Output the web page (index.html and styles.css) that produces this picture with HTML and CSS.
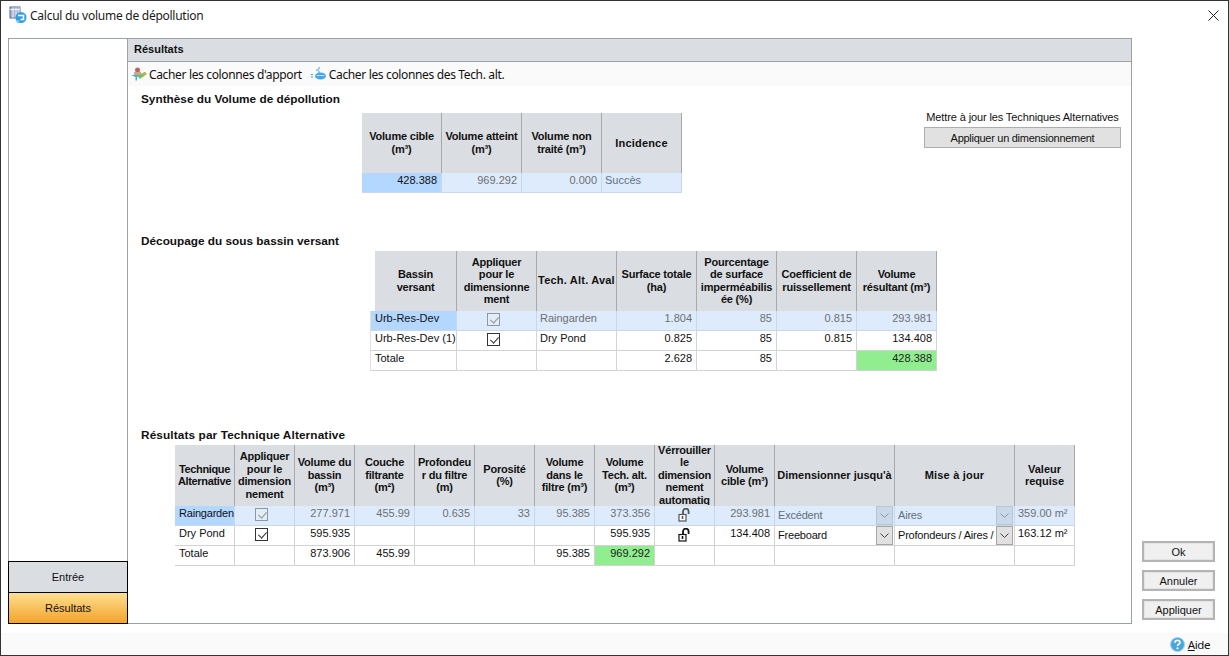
FILE: index.html
```html
<!DOCTYPE html>
<html lang="fr">
<head>
<meta charset="utf-8">
<title>Calcul du volume de dépollution</title>
<link rel="stylesheet" href="styles.css">
</head>
<body>
<div class="window">
  <header class="titlebar">
    <svg class="title-icon" width="19" height="18" viewBox="0 0 19 18">
      <rect x="1" y="1" width="10" height="11" fill="#aab4d4" stroke="#5d6a95"/>
      <path d="M1 3.500h10M4 1v11M7 1v11M10 1v11" stroke="#fff" stroke-width=".8"/>
      <circle cx="12" cy="11.500" r="5.500" fill="#2f9fe4"/>
      <path d="M9 9.500h5.500v4h-3" fill="none" stroke="#fff" stroke-width="1.600"/>
      <circle cx="9" cy="15.500" r="1.500" fill="#7cc8f4"/>
    </svg>
    <span class="title-text">Calcul du volume de dépollution</span>
    <svg class="close" width="11" height="11" viewBox="0 0 11 11"><path d="M.5.500l10 10M10.500.500l-10 10" stroke="#222" stroke-width="1" fill="none"/></svg>
  </header>

  <div class="main">
    <div class="panel">
      <nav class="nav">
        <div class="tab">Entrée</div>
        <div class="tab tab-active">Résultats</div>
      </nav>
      <section class="content">
        <div class="content-head">Résultats</div>
        <div class="toolbar">
          <span class="tool">
            <svg width="16" height="14" viewBox="0 0 16 14">
              <circle cx="6.500" cy="3" r="2.500" fill="#b9685c"/>
              <path d="M3 5h7v3.500H3z" fill="#d8a095"/>
              <path d="M6 8.500l8-3.500 2 2-7 5z" fill="#7fbf5f"/>
              <path d="M0 8h9L6 10v3.500H4.500V10z" fill="#3fb6c0"/>
              <path d="M11 6.500l3-1.500 1 2-2 1z" fill="#c9b04e"/>
            </svg>
            Cacher les colonnes d'apport
          </span>
          <span class="tool">
            <svg width="16" height="14" viewBox="0 0 16 14">
              <path d="M0 7.500h2M0 10h2M5 3h3M7 1h2M7 5h2" stroke="#3a9be0" stroke-width="1.200" fill="none"/>
              <ellipse cx="9.500" cy="9" rx="5.500" ry="3.500" fill="#43a9ec"/>
              <path d="M5.500 8.500h8" stroke="#bfe3fa" stroke-width="1"/>
            </svg>
            Cacher les colonnes des Tech. alt.
          </span>
        </div>

        <h2 class="sec-title">Synthèse du Volume de dépollution</h2>
        <div class="synth-row">
          <table class="grid grid-synth">
            <colgroup><col class="c80"><col class="c80"><col class="c80"><col class="c80"></colgroup>
            <thead>
              <tr><th>Volume cible<br>(m³)</th><th>Volume atteint<br>(m³)</th><th>Volume non<br>traité (m³)</th><th class="wide single">Incidence</th></tr>
            </thead>
            <tbody>
              <tr class="sel"><td class="num first">428.388</td><td class="num">969.292</td><td class="num">0.000</td><td class="blue">Succès</td></tr>
            </tbody>
          </table>
          <aside class="apply">
            <p class="apply-label">Mettre à jour les Techniques Alternatives</p>
            <button class="apply-btn" type="button">Appliquer un dimensionnement</button>
          </aside>
        </div>

        <h2 class="sec-title sec-two">Découpage du sous bassin versant</h2>
        <table class="grid grid-split">
          <colgroup><col class="c87"><col class="c80"><col class="c80"><col class="c80"><col class="c80"><col class="c80"><col class="c80"></colgroup>
          <thead>
            <tr>
              <th class="inset">Bassin<br>versant</th><th>Appliquer<br>pour le<br>dimensionne<br>ment</th><th class="wide">Tech. Alt. Aval</th><th>Surface totale<br>(ha)</th><th>Pourcentage<br>de surface<br>imperméabilis<br>ée (%)</th><th>Coefficient de<br>ruissellement</th><th>Volume<br>résultant (m³)</th>
            </tr>
          </thead>
          <tbody>
            <tr class="sel"><td class="first">Urb-Res-Dev</td><td class="mid"><span class="check dim"></span></td><td>Raingarden</td><td class="num">1.804</td><td class="num">85</td><td class="num">0.815</td><td class="num">293.981</td></tr>
            <tr><td class="first">Urb-Res-Dev (1)</td><td class="mid"><span class="check"></span></td><td>Dry Pond</td><td class="num">0.825</td><td class="num">85</td><td class="num">0.815</td><td class="num">134.408</td></tr>
            <tr><td class="first">Totale</td><td></td><td></td><td class="num">2.628</td><td class="num">85</td><td></td><td class="num ok">428.388</td></tr>
          </tbody>
        </table>

        <h2 class="sec-title sec-three">Résultats par Technique Alternative</h2>
        <table class="grid grid-tech">
          <colgroup><col class="c60"><col class="c60"><col class="c60"><col class="c60"><col class="c60"><col class="c60"><col class="c60"><col class="c60"><col class="c60"><col class="c60"><col class="c120"><col class="c120"><col class="c60"></colgroup>
          <thead>
            <tr>
              <th class="tight">Technique<br>Alternative</th><th>Appliquer<br>pour le<br>dimension<br>nement</th><th>Volume du<br>bassin<br>(m³)</th><th>Couche<br>filtrante<br>(m²)</th><th>Profondeu<br>r du filtre<br>(m)</th><th>Porosité<br>(%)</th><th>Volume<br>dans le<br>filtre (m³)</th><th>Volume<br>Tech. alt.<br>(m³)</th>
              <th class="clip"><div class="clip-box"><div>Vérrouiller<br>le<br>dimension<br>nement<br>automatiq</div></div></th>
              <th>Volume<br>cible (m³)</th><th class="plain">Dimensionner jusqu'à</th><th class="wide">Mise à jour</th><th class="plain">Valeur<br>requise</th>
            </tr>
          </thead>
          <tbody>
            <tr class="sel">
              <td class="first fit">Raingarden</td><td class="mid"><span class="check dim"></span></td><td class="num">277.971</td><td class="num">455.99</td><td class="num">0.635</td><td class="num">33</td><td class="num">95.385</td><td class="num">373.356</td>
              <td class="mid"><svg class="lock" width="12" height="14" viewBox="0 0 12 14"><path d="M5 7V3.500a2.800 2.800 0 0 1 5.600 0V6" fill="none" stroke="#555" stroke-width="1.800"/><rect x="1" y="6.500" width="7" height="6.500" fill="#fff" stroke="#555" stroke-width="1.200"/><path d="M4.500 8v3" stroke="#555" stroke-width="1.600"/></svg></td>
              <td class="num">293.981</td>
              <td class="cell-combo"><div class="combo"><span class="combo-text">Excédent</span><span class="combo-btn"><svg width="9" height="5" viewBox="0 0 9 5"><path d="M.5.500l4 4 4-4" fill="none" stroke="#8a98a8"/></svg></span></div></td>
              <td class="cell-combo"><div class="combo"><span class="combo-text">Aires</span><span class="combo-btn"><svg width="9" height="5" viewBox="0 0 9 5"><path d="M.5.500l4 4 4-4" fill="none" stroke="#8a98a8"/></svg></span></div></td>
              <td>359.00 m²</td>
            </tr>
            <tr>
              <td class="first">Dry Pond</td><td class="mid"><span class="check"></span></td><td class="num">595.935</td><td></td><td></td><td></td><td></td><td class="num">595.935</td>
              <td class="mid"><svg class="lock" width="12" height="14" viewBox="0 0 12 14"><path d="M5 7V3.500a2.800 2.800 0 0 1 5.600 0V6" fill="none" stroke="#111" stroke-width="1.800"/><rect x="1" y="6.500" width="7" height="6.500" fill="#fff" stroke="#111" stroke-width="1.200"/><path d="M4.500 8v3" stroke="#111" stroke-width="1.600"/></svg></td>
              <td class="num">134.408</td>
              <td class="cell-combo"><div class="combo"><span class="combo-text">Freeboard</span><span class="combo-btn"><svg width="9" height="5" viewBox="0 0 9 5"><path d="M.5.500l4 4 4-4" fill="none" stroke="#444"/></svg></span></div></td>
              <td class="cell-combo"><div class="combo"><span class="combo-text">Profondeurs / Aires /</span><span class="combo-btn"><svg width="9" height="5" viewBox="0 0 9 5"><path d="M.5.500l4 4 4-4" fill="none" stroke="#444"/></svg></span></div></td>
              <td>163.12 m²</td>
            </tr>
            <tr>
              <td class="first">Totale</td><td></td><td class="num">873.906</td><td class="num">455.99</td><td></td><td></td><td class="num">95.385</td><td class="num ok">969.292</td><td></td><td></td><td></td><td></td><td></td>
            </tr>
          </tbody>
        </table>
      </section>
    </div>
    <div class="actions">
      <button class="btn" type="button">Ok</button>
      <button class="btn" type="button">Annuler</button>
      <button class="btn" type="button">Appliquer</button>
    </div>
  </div>

  <footer class="footer">
    <svg width="15" height="15" viewBox="0 0 15 15">
      <circle cx="7.500" cy="7.500" r="7" fill="#47a6dc" stroke="#a5d4ef"/>
      <path d="M5 5.700c0-3 5-3 5-.2 0 1.800-2.500 1.800-2.500 3.600" fill="none" stroke="#fff" stroke-width="1.700"/>
      <circle cx="7.500" cy="11.300" r="1.100" fill="#fff"/>
    </svg>
    <span class="help"><u>A</u>ide</span>
  </footer>
</div>
</body>
</html>
```
FILE: styles.css
```css
* { box-sizing: border-box; }
html, body { margin: 0; padding: 0; }
body {
  width: 1229px;
  height: 656px;
  overflow: hidden;
  background: #fff;
  font-family: "Liberation Sans", Arial, sans-serif;
  font-size: 11px;
  color: #111;
}
.window {
  width: 1229px;
  height: 656px;
  border: 1px solid #333;
  display: flex;
  flex-direction: column;
}
.titlebar {
  height: 37px;
  flex: none;
  display: flex;
  align-items: center;
  padding: 0 9px 9px 8px;
}
.title-icon { flex: none; }
.title-text {
  margin-left: 2px;
  font-family: "Noto Sans", sans-serif;
  font-size: 12px;
  letter-spacing: -0.26px;
  color: #1a1a1a;
}
.close { margin-left: auto; }

.main {
  flex: 1;
  display: flex;
  padding-left: 7px;
  min-height: 0;
}
.panel {
  width: 1124px;
  height: 586px;
  border: 1px solid #9aa1a7;
  display: flex;
}
.nav {
  width: 119px;
  flex: none;
  border-right: 1px solid #9aa1a7;
  display: flex;
  flex-direction: column;
  justify-content: flex-end;
}
.tab {
  width: 120px;
  height: 32px;
  margin-left: -1px;
  border: 1px solid #000;
  background: #dadee2;
  display: flex;
  align-items: center;
  justify-content: center;
  color: #111;
}
.tab-active {
  margin-top: -1px;
  margin-bottom: -1px;
  background: linear-gradient(#fddf90, #f4a32b);
}
.content { flex: 1; min-width: 0; }
.content-head {
  height: 23px;
  border-bottom: 1px solid #9aa1a7;
  background: #dadee2;
  padding-left: 6px;
  font-weight: bold;
  line-height: 21px;
  color: #111;
}
.toolbar {
  height: 24px;
  background: #fafafa;
  display: flex;
  align-items: center;
  padding-left: 3px;
  gap: 9px;
  font-family: "Noto Sans", sans-serif;
  font-size: 12px;
  letter-spacing: -0.35px;
}
.tool { display: flex; align-items: center; gap: 2px; }
.sec-title {
  margin: 6px 0 0 13px;
  height: 14px;
  font-size: 11.800px;
  line-height: 14px;
  font-weight: bold;
  color: #111;
}
.sec-two { margin-top: 41px; margin-bottom: 3px; }
.sec-three { margin-top: 57px; margin-bottom: 3px; letter-spacing: 0.12px; }

.synth-row { display: flex; align-items: flex-start; }
.apply { margin: 4px 10px 0 auto; width: 197px; }
.apply-label {
  margin: 0 0 3px;
  height: 14px;
  line-height: 14px;
  text-align: center;
  white-space: nowrap;
  letter-spacing: -0.12px;
}
.apply-btn {
  display: block;
  width: 197px;
  height: 21px;
  padding: 0;
  border: 1px solid #adadad;
  background: #e1e1e1;
  font: inherit;
  letter-spacing: -0.28px;
  color: #111;
}

.grid { border-collapse: separate; border-spacing: 0; table-layout: fixed; }
.grid-synth { width: 320px; margin: 7px 0 0 234px; }
.grid-split { width: 567px; margin-left: 242px; }
.grid-tech { width: 900px; margin-left: 47px; }
.c60 { width: 60px; }
.c80 { width: 80px; }
.c87 { width: 87px; }
.c120 { width: 120px; }

.grid th {
  height: 60px;
  padding: 0 0 1px;
  background: #dadee2;
  border-right: 1px solid #a9a9a9;
  font-size: 11px;
  line-height: 12.500px;
  font-weight: bold;
  text-align: center;
  vertical-align: middle;
  white-space: nowrap;
  overflow: hidden;
  letter-spacing: -0.2px;
  color: #111;
}
.grid th.wide { letter-spacing: 0.2px; }
.grid th.single { padding-bottom: 0; }
.grid th.plain { letter-spacing: 0; }
.grid th.tight { letter-spacing: -0.35px; }
.grid th.inset { border-left: 5px solid #fff; }
.grid-tech th { height: 61px; }
.clip-box {
  height: 60px;
  overflow: hidden;
  display: flex;
  align-items: center;
  justify-content: center;
}
.grid td {
  height: 20px;
  padding: 1px 3px 0 3px;
  border-right: 1px solid #d3d3d3;
  border-bottom: 1px solid #d3d3d3;
  line-height: 13px;
  vertical-align: top;
  white-space: nowrap;
  overflow: hidden;
  color: #111;
}
.grid td.first { padding-left: 4px; padding-right: 0; }
.grid td.fit { letter-spacing: -0.2px; }
.grid td.num { text-align: right; padding-right: 4px; }
.grid td.ok { background: #90ee90; color: #222; }
.grid td.mid { text-align: center; padding: 2px 0 0; vertical-align: top; line-height: 0; }
.grid-split td:first-child { border-left: 1px solid #e2e2e2; }

.sel td { background: #ddebfd; color: #6f6f6f; border-color: #c9d7e8; }
.grid .sel td.first { background: #b3d7ff; color: #111; }
.grid .sel td.blue { color: #5f6f85; }

.check {
  display: inline-block;
  vertical-align: top;
  position: relative;
  width: 13px;
  height: 13px;
  margin-right: 6px;
  border: 1px solid #333;
  background: #fff;
}
.check::after {
  content: "";
  position: absolute;
  left: 3.500px;
  top: 1px;
  width: 4px;
  height: 7px;
  border: solid #333;
  border-width: 0 1px 1px 0;
  transform: rotate(42deg);
}
.check.dim { border-color: #8b97a3; background: #e4ecf5; }
.check.dim::after { border-color: #8b97a3; }
.lock { display: inline-block; vertical-align: top; margin-right: 2px; }

.grid td.cell-combo { padding: 0; }
.combo { display: flex; height: 19px; align-items: stretch; }
.combo-text {
  flex: 1;
  min-width: 0;
  overflow: hidden;
  padding: 2px 0 0 3px;
  line-height: 14px;
  letter-spacing: -0.2px;
}
.sel .combo-text { color: #607080; }
.combo-btn {
  width: 17px;
  flex: none;
  margin-right: 1px;
  border: 1px solid #a6a6a6;
  background: #e1e1e1;
  display: flex;
  align-items: center;
  justify-content: center;
}
.sel .combo-btn { background: #c9d9e9; border-color: #b5c6d8; }

.actions {
  width: 73px;
  margin-left: 10px;
  display: flex;
  flex-direction: column;
  justify-content: flex-end;
  gap: 8px;
  padding-bottom: 13px;
}
.btn {
  height: 21px;
  padding: 0;
  border: 2px solid #b4b4b4;
  outline: 1px solid #e4e4e4;
  outline-offset: -3px;
  background: #f0f0f0;
  font: inherit;
  font-size: 11px;
  color: #111;
}
.footer {
  height: 22px;
  flex: none;
  background: #fafafa;
  display: flex;
  align-items: center;
  justify-content: flex-end;
  gap: 3px;
  padding-right: 18px;
  font-family: "Noto Sans", sans-serif;
  font-size: 11.500px;
}
.help { letter-spacing: -0.4px; }
```
